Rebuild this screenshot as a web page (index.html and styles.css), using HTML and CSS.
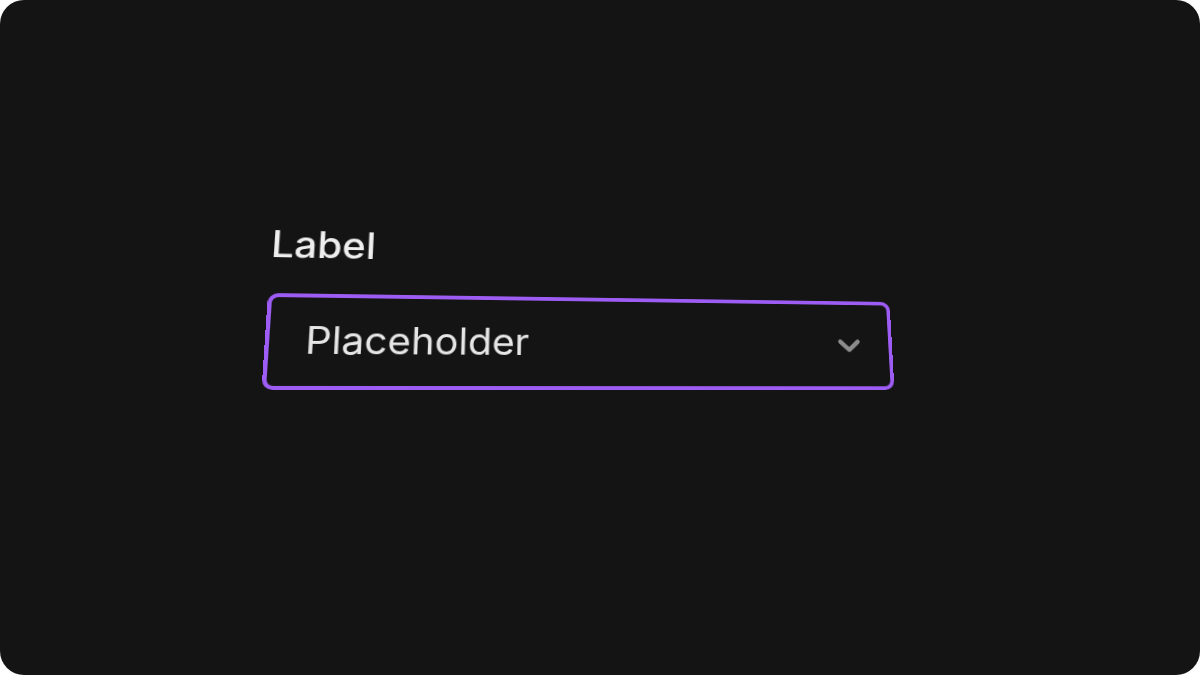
FILE: index.html
```html
<!DOCTYPE html>
<html lang="en">
<head>
<meta charset="utf-8">
<title>Select</title>
<link rel="stylesheet" href="styles.css">
</head>
<body>
  <main class="panel">
    <div class="field">
      <label class="field-label" for="sel">Label</label>
      <div class="select" id="sel" role="combobox" aria-expanded="false">
        <span class="select-placeholder">Placeholder</span>
        <svg class="select-chevron" width="26" height="18" viewBox="0 0 26 18" aria-hidden="true">
          <polyline points="3.5,4.5 13,13.5 22.5,4.5" fill="none" stroke="#8c8c8c" stroke-width="4.5" stroke-linecap="round" stroke-linejoin="round"/>
        </svg>
      </div>
    </div>
  </main>
</body>
</html>
```

FILE: styles.css
```css
html, body {
  margin: 0;
  padding: 0;
  background: #ffffff;
}

.panel {
  width: 1200px;
  height: 675px;
  box-sizing: border-box;
  background: #141414;
  border-radius: 24px;
  overflow: hidden;
  padding: 223px 0 0 267.5px;
  font-family: Inter, "Noto Sans", "Liberation Sans", sans-serif;
}

.field {
  width: 628px;
  display: flex;
  flex-direction: column;
  transform-origin: 0 70px;
  transform: matrix3d(1.09086, 0.015796, 0, 0.00016285, -0.065742, 0.98102, 0, -0.00019562, 0, 0, 1, 0, 0, 0, 0, 1);
}

.field-label {
  display: block;
  font-size: 38px;
  line-height: 38px;
  font-weight: 500;
  color: #eeeeee;
  margin: 0 0 32px 0;
}

.select {
  width: 628px;
  height: 97px;
  box-sizing: border-box;
  border: 4px solid #9d5cf3;
  border-radius: 10px;
  display: flex;
  align-items: center;
  justify-content: space-between;
  padding: 0 30px 0 33px;
}

.select-placeholder {
  font-size: 38px;
  line-height: 38px;
  font-weight: 400;
  color: #e6e6e6;
  margin-top: -3px;
}

.select-chevron {
  display: block;
  flex: none;
}
```
